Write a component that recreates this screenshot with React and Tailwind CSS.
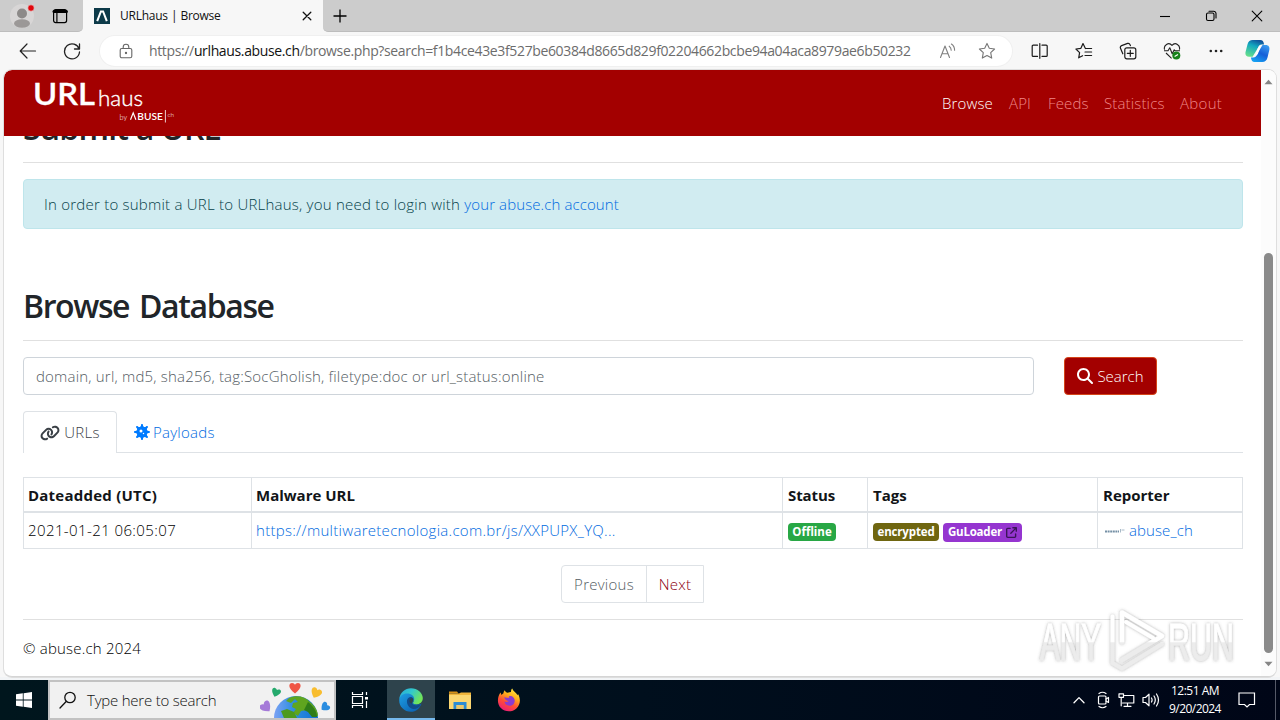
import React from "react";
import { FaLink, FaVirus, FaMagnifyingGlass, FaArrowUpRightFromSquare } from "react-icons/fa6";

function Ic({ className = "", children, w = 20, h = 20, sw = 1.1 }) {
  return (
    <svg className={"block shrink-0 " + className} width={w} height={h} viewBox={`0 0 ${w} ${h}`} fill="none" stroke="currentColor" strokeWidth={sw} strokeLinecap="round" strokeLinejoin="round">
      {children}
    </svg>
  );
}

function TabStrip() {
  return (
    <div className="flex h-8 shrink-0 bg-[#f7f7f7]">
      <div className="flex h-8 w-[83px] items-center rounded-br-[5px] border-b border-[#bdbdbd] bg-[#cccccc]">
        <svg className="ml-[10px] block" width="26" height="26" viewBox="0 0 26 26">
          <circle cx="12" cy="13" r="12" fill="#d8d6d6" />
          <circle cx="12" cy="10.5" r="5" fill="#8d8a89" />
          <ellipse cx="12" cy="20.5" rx="8" ry="4.2" fill="#9b9897" />
          <circle cx="21" cy="5" r="3.2" fill="#e0060c" stroke="#e8d5d5" strokeWidth=".6" />
        </svg>
        <Ic w={16} h={16} sw={1.2} className="ml-4 text-black">
          <rect x="1.6" y="1.6" width="13" height="13" rx="2" />
          <path d="M2 3.4h12.4" strokeWidth="3" />
          <path d="M4.9 4v10" strokeWidth="1.2" />
        </Ic>
      </div>
      <div className="flex h-8 w-[240px] items-center rounded-t-lg bg-[#f7f7f7] pl-[11px]">
        <svg width="16" height="16" viewBox="0 0 16 16" className="block">
          <rect width="16" height="16" fill="#0d3a49" />
          <path d="M3.2 13.2 6.9 3.4h2.2l3.7 9.8" fill="none" stroke="#fff" strokeWidth="2" />
        </svg>
        <span className="ml-[10px] w-[170px] whitespace-nowrap text-[12px] leading-4 tracking-[-0.25px] text-[#111] [word-spacing:0.3px]">URLhaus | Browse</span>
        <Ic w={10} h={10} sw={1.3} className="ml-[12px] text-[#111]"><path d="M1.2 1.2l7.6 7.6M8.8 1.2 1.2 8.8" /></Ic>
      </div>
      <div className="flex h-8 flex-1 items-center rounded-bl-[5px] border-b border-[#bdbdbd] bg-[#cccccc]">
        <Ic w={16} h={16} sw={1.3} className="ml-[9px] text-black"><path d="M8 1.5v13M1.5 8h13" strokeLinecap="butt" /></Ic>
        <div className="ml-auto flex items-center pr-[17px] text-black">
          <Ic w={12} h={12} className="mr-[34px]"><path d="M1 6.5h10" strokeLinecap="butt" /></Ic>
          <Ic w={12} h={12} className="mr-[34px]"><rect x="1.5" y="3" width="7.5" height="7.5" rx="1.5" /><path d="M4 1.2h4.5A2.4 2.4 0 0 1 11 3.6V8" /></Ic>
          <Ic w={12} h={12}><path d="M1.2 1.2l9.6 9.6M10.8 1.2 1.2 10.8" /></Ic>
        </div>
      </div>
    </div>
  );
}

function Toolbar() {
  return (
    <div className="flex h-[38px] shrink-0 items-center bg-[#f7f7f7] text-[#222]">
      <Ic w={18} h={18} sw={1.2} className="ml-[19px]"><path d="M16.5 9H1.5M8 2 1.2 9 8 16" /></Ic>
      <Ic w={18} h={18} sw={1.3} className="ml-[26px]"><path d="M16.2 7.2A7.5 7.5 0 1 0 16.5 10M16.5 2v5h-5" /></Ic>
      <div className="ml-[19px] flex h-[30px] w-[912px] items-center rounded-full bg-white shadow-[0_0_0_1px_#f0f0f0]">
        <Ic w={14} h={16} className="ml-[19px] text-[#666]"><rect x="1.2" y="5.5" width="11.6" height="9.3" rx="1.6" /><path d="M4.2 5.5V4a2.8 2.8 0 0 1 5.6 0v1.5" /><circle cx="7" cy="10" r=".6" fill="currentColor" /></Ic>
        <span className="ml-[16px] w-[780px] whitespace-nowrap text-[14px] leading-5 tracking-[-0.36px] text-[#6c6c6c]">
          https://<span className="text-[#111]">urlhaus.abuse.ch</span>/browse.php?search=f1b4ce43e3f527be60384d8665d829f02204662bcbe94a04aca8979ae6b50232
        </span>
        <Ic w={18} h={18} className="ml-[10px] text-[#808080]"><path d="M1.5 15.5 6 4l4.5 11.5M3 11.8h6M10.2 4.2q2 1.4 2 4M12.4 2q3.2 2.2 3.2 6.2" /></Ic>
        <Ic w={18} h={18} className="ml-[21px] text-[#777]"><path d="M9 1.4l2.3 4.9 5.3.7-3.9 3.7 1 5.4L9 13.5l-4.7 2.6 1-5.4L1.4 7l5.3-.7z" /></Ic>
      </div>
      <div className="ml-[19px] flex flex-1 items-center text-[#1b1b1b]">
        <Ic w={18} h={18} sw={1.2}><path d="M6.5 3.2H2.2a1 1 0 0 0-1 1v9.2a1 1 0 0 0 1 1h4.3M11 3.2h4.2a1 1 0 0 1 1 1v9.2a1 1 0 0 1-1 1H11M8.8 1.5v14.8" /></Ic>
        <Ic w={18} h={18} sw={1.2} className="ml-[26px]"><path d="M10.4 6.5 8 1.6 5.9 6.3l-5 .7 3.7 3.6-.9 5.2 3.9-2.1M10.4 6.500h6.200M10 10h6.600M10 13.500h6.600" /></Ic>
        <Ic w={18} h={18} sw={1.2} className="ml-[26px]"><rect x="5.8" y="5.8" width="11" height="11" rx="2" /><path d="M11.3 8.3v6M8.3 11.3h6M3.8 11.8 1.5 6.2a2 2 0 0 1 1.1-2.6l6-2.2A2 2 0 0 1 11 2.6l.4 1" /></Ic>
        <svg width="18" height="18" viewBox="0 0 18 18" className="ml-[26px] block" fill="none" stroke="#222" strokeWidth="1.1">
          <path d="M1.6 7.6C.2 3.5 5.6-.6 9 3.4c3.4-4 8.6.1 7.4 4.2M1 8.8h4l1.8-3 2.4 6 2-4 1 1H17M3 11l5.6 5.3" strokeLinejoin="round" />
          <circle cx="13.3" cy="13.6" r="4" fill="#16821b" stroke="none" /><path d="M11.6 14.5l3.4-2" stroke="#fff" strokeWidth="1.1" />
        </svg>
        <svg width="14" height="4" viewBox="0 0 14 4" className="ml-[28px] block" fill="#222"><circle cx="1.8" cy="2" r="1.3" /><circle cx="7" cy="2" r="1.3" /><circle cx="12.2" cy="2" r="1.3" /></svg>
        <svg width="25" height="24" viewBox="0 0 25 24" className="ml-[22px] block">
          <defs>
            <linearGradient id="cpa" x1=".6" y1="0" x2=".2" y2="1"><stop offset="0" stopColor="#10559c" /><stop offset=".35" stopColor="#12a7c0" /><stop offset="1" stopColor="#67e08b" /></linearGradient>
            <linearGradient id="cpb" x1=".8" y1="0" x2=".3" y2="1"><stop offset="0" stopColor="#3a9cf0" /><stop offset=".5" stopColor="#165fd8" /><stop offset="1" stopColor="#16a0f2" /></linearGradient>
          </defs>
          <path d="M17.5 6h3.200c3 0 4.300 2.200 3.600 5l-1.800 7.500c-.7 2.900-2.400 4.500-5.200 4.500H9.600c-2.300 0-3.100-1.600-3.700-4.600h2.400c2 0 3-1 3.600-3z" fill="url(#cpb)" />
          <path d="M7.6 17.700H4.100c-3 0-4.200-2.200-3.500-5L2.600 5C3.300 2.200 5.100 1 7.700 1h7.600c2.300 0 3.300 1.400 3.800 4.500h-2.300c-2 0-3 1-3.600 3z" fill="url(#cpa)" />
          <path d="M12.8 9.200q.9-2.400 3-2.400l-2.900 8q-.8 2-2.700 2z" fill="#fff" />
        </svg>
      </div>
    </div>
  );
}

function SiteHeader() {
  return (
    <header className="flex h-[66px] w-[1257px] shrink-0 items-center rounded-tl-lg bg-[#a30000] text-[16px]">
      <svg width="160" height="66" viewBox="0 0 160 66" className="ml-5 block" fill="#fff" fontFamily="Lato, sans-serif">
        <text x="9" y="35" fontSize="30" fontWeight="600" textLength="62" lengthAdjust="spacingAndGlyphs" stroke="#fff" strokeWidth=".3">URL</text>
        <text x="74" y="35.5" fontSize="22" fontWeight="300" textLength="45" lengthAdjust="spacingAndGlyphs" stroke="#fff" strokeWidth=".4">haus</text>
        <text x="95.5" y="49.8" fontSize="7.5" textLength="7.5" fontWeight="300" lengthAdjust="spacingAndGlyphs">by</text>
        <path d="M106.5 49.800l2.700-7 2.700 7" fill="none" stroke="#fff" strokeWidth="1.2" />
        <text x="113.3" y="49.8" fontSize="9.5" fontWeight="600" textLength="25.5" lengthAdjust="spacingAndGlyphs">BUSE</text>
        <path d="M141.4 40v12.500" stroke="#fff" strokeWidth=".8" />
        <text x="143.5" y="46.5" fontSize="6.5" textLength="6.5" fontWeight="300" lengthAdjust="spacingAndGlyphs">ch</text>
      </svg>
      <nav className="ml-auto flex pr-[38px] text-[15px] font-light tracking-[0.15px] text-[#f08888]">
        <span className="w-[67px] text-white">Browse</span>
        <span className="w-[39px]">API</span>
        <span className="w-[56px]">Feeds</span>
        <span className="w-[76px]">Statistics</span>
        <span className="w-[43px] tracking-[0.3px]">About</span>
      </nav>
    </header>
  );
}

const cols = "grid grid-cols-[228px_531px_85px_230px_144px]";

function ResultsTable() {
  return (
    <div className="mt-6 w-[1220px] border border-[#dee2e6] text-[15px] text-[#121518]">
      <div className={cols + " h-[35px] border-b-2 border-[#dee2e6] font-bold leading-[34px]"}>
        <div className="pl-1 tracking-[0.23px]">Dateadded (UTC)</div>
        <div className="-ml-px border-l border-[#dee2e6] pl-1">Malware URL</div>
        <div className="-ml-px border-l border-[#dee2e6] pl-[5px] tracking-[-0.1px]">Status</div>
        <div className="-ml-px border-l border-[#dee2e6] pl-[5px]">Tags</div>
        <div className="-ml-px border-l border-[#dee2e6] pl-[5px]">Reporter</div>
      </div>
      <div className={cols + " h-[35px] font-light leading-[34px]"}>
        <div className="pl-1 tracking-[0.4px] text-black">2021-01-21 06:05:07</div>
        <div className="-ml-px border-l border-[#dee2e6] pl-1 tracking-[0.29px] text-[#006ae0]">https://multiwaretecnologia.com.br/js/XXPUPX_YQ...</div>
        <div className="-ml-px flex items-center border-l border-[#dee2e6] pl-[5px]">
          <span className="mt-[3px] flex h-[18px] w-[48px] items-center justify-center rounded bg-[#28a745] text-[11.5px] font-bold leading-none text-white">Offline</span>
        </div>
        <div className="-ml-px flex items-center gap-1 border-l border-[#dee2e6] pl-[5px] text-[11.5px] font-bold leading-none text-white">
          <span className="mt-[3px] flex h-[18px] w-[66px] items-center justify-center rounded bg-[#6f6610] tracking-[-0.15px]">encrypted</span>
          <span className="mt-[3px] flex h-[19px] w-[79px] items-center justify-center gap-[4px] rounded bg-[#9535d0] tracking-[-0.2px]">GuLoader <FaArrowUpRightFromSquare className="text-[11px] text-[#3a1458]" /></span>
        </div>
        <div className="-ml-px flex items-center border-l border-[#dee2e6] pl-[6px] text-[#006ae0]">
          <svg width="21" height="6" viewBox="0 0 21 6" className="mr-[4px] block"><path d="M1 3.5h14" stroke="#7590a5" strokeWidth="2" strokeDasharray="2 .6" /><path d="M16.5 1v3.5M17.5 2h3" stroke="#a8bac8" strokeWidth="1" /></svg>
          <span className="-mt-px tracking-[0.1px]">abuse_ch</span>
        </div>
      </div>
    </div>
  );
}

function Watermark() {
  return (
    <svg className="pointer-events-none absolute left-[1025px] top-[534px] block" width="216" height="72" viewBox="0 0 216 72">
      <defs>
        <filter id="wm" x="-10%" y="-10%" width="120%" height="120%"><feDropShadow dx="0" dy="0" stdDeviation="1.6" floodColor="#555" floodOpacity=".5" /></filter>
        <linearGradient id="wg" gradientUnits="userSpaceOnUse" x1="0" y1="0" x2="0" y2="72"><stop offset=".52" stopColor="#fff" /><stop offset=".54" stopColor="#ececec" /></linearGradient>
      </defs>
      <g filter="url(#wm)" fill="url(#wg)" stroke="url(#wg)" strokeWidth="1" fontFamily="'Liberation Sans', Arial, sans-serif" fontSize="51">
        <text x="11" y="56" textLength="61" lengthAdjust="spacingAndGlyphs">ANY</text>
        <text x="139" y="56" textLength="66" lengthAdjust="spacingAndGlyphs">RUN</text>
        <path d="M93 38V8.500L133 32 93 56" fill="none" strokeWidth="4.5" strokeLinejoin="round" strokeLinecap="round" />
        <path d="M83.500 12.500V59L93 64.500 133 40M97 18l27 16" fill="none" strokeWidth="4" strokeLinejoin="round" strokeLinecap="round" />
      </g>
    </svg>
  );
}

function Page() {
  return (
    <div className="relative mx-1 h-[607px] w-[1272px] shrink-0 overflow-hidden rounded-lg border-b border-[#d5d5d5] bg-white shadow-[0_0_0_1px_#dedede]">
      <div className="flex h-full">
        <div className="flex w-[1257px] flex-col">
          <SiteHeader />
          <div className="flex-1 overflow-hidden">
            <main className="-mt-7 flex w-[1240px] flex-col pl-[19px] text-[#212529]">
              <h2 className="h-[38px] text-[32px] font-semibold leading-[40px] tracking-[-0.8px]">Submit a URL</h2>
              <div className="mt-4 h-px w-[1220px] bg-[#e0e0e0]" />
              <div className="mt-4 flex h-[50px] w-[1220px] items-center rounded border border-[#bee5eb] bg-[#d1ecf1] pl-5 text-[15px] font-light tracking-[0.23px] text-[#053f49]">
                <span className="whitespace-pre">In order to submit a URL to URLhaus, you need to login with <span className="tracking-[0.1px] text-[#006ae0]">your abuse.ch account</span></span>
              </div>
              <h2 className="mt-[57px] h-[38px] text-[32px] font-semibold leading-[40px] tracking-[-1.4px] [word-spacing:3px]">Browse Database</h2>
              <div className="mt-4 h-px w-[1220px] bg-[#e0e0e0]" />
              <div className="mt-4 flex h-[38px]">
                <div className="flex w-[1011px] items-center rounded border border-[#ced4da] pl-3 text-[15px] font-light tracking-[0.19px] text-[#545c63]">domain, url, md5, sha256, tag:SocGholish, filetype:doc or url_status:online</div>
                <button className="ml-[30px] flex w-[93px] items-center justify-center gap-1 rounded border border-[#d5451a] bg-[#a30000] text-[15px] font-light text-white"><FaMagnifyingGlass className="text-[16px]" />Search</button>
              </div>
              <div className="mt-4 flex h-[42px] w-[1220px] text-[15px] font-light tracking-[0.25px]">
                <div className="flex w-[94px] items-center justify-center gap-1 rounded-t border border-b-0 border-[#dee2e6] text-[#3a4046]"><FaLink className="h-5 w-5" />URLs</div>
                <div className="flex flex-1 items-center gap-[3px] border-b border-[#dee2e6] pl-[17px] text-[#006ae0]"><FaVirus className="text-[16px] text-[#007bff]" /><span className="pt-px">Payloads</span></div>
              </div>
              <ResultsTable />
              <div className="mt-4 ml-[538px] flex h-[38px] w-[143px] rounded-l border border-[#dee2e6] text-[15px] font-light tracking-[0.25px]">
                <span className="flex w-[85px] items-center justify-center border-r border-[#dee2e6] text-[#545c63]">Previous</span>
                <span className="flex flex-1 items-center justify-center text-[#8c0010]">Next</span>
              </div>
              <div className="mt-4 h-px w-[1220px] bg-[#e0e0e0]" />
              <p className="mt-4 text-[15px] font-light leading-6 tracking-[0.2px] text-black">© abuse.ch 2024</p>
            </main>
          </div>
        </div>
        <div className="flex flex-1 flex-col items-center bg-[#fcfcfc]">
          <svg width="9" height="6" viewBox="0 0 10 6" className="mt-[9px] block" fill="#858585"><path d="M.5 5.5 5 .5l4.500 5z" /></svg>
          <div className="mt-[168px] h-[400px] w-[9px] rounded-full bg-[#8a8a8a]" />
          <svg width="9" height="6" viewBox="0 0 10 6" className="mt-[8px] block" fill="#858585"><path d="M.5.5 5 5.500 9.500.5z" /></svg>
        </div>
      </div>
      <Watermark />
    </div>
  );
}

function Heart({ t, c }) {
  return <path transform={t} d="M0 5.500C-8-.5-6-5-3-5-1.500-5-.3-4-0-3.200.3-4 1.500-5 3-5 6-5 8-.5 0 5.500z" fill={c} />;
}

function Taskbar() {
  return (
    <div className="flex h-10 shrink-0 bg-gradient-to-r from-[#00161d] via-[#000f1d] to-[#000617] text-white">
      <div className="flex w-12 items-center justify-center">
        <svg width="16" height="16" viewBox="0 0 16 16" fill="#fff" className="block"><path d="M0 2.300l6.800-1v6.300H0zM7.600 1.200 16 0v7.600H7.600zM0 8.400h6.800v6.300L0 13.700zM7.600 8.400H16V16l-8.400-1.200z" /></svg>
      </div>
      <div className="flex h-10 w-[288px] items-center overflow-hidden border-2 border-[#c2c2c2] bg-[#f1f1f1] text-[#111]">
        <Ic w={18} h={18} sw={1.3} className="ml-[9px]"><circle cx="11" cy="6.500" r="5.200" /><path d="M7.200 10.500 1 17" /></Ic>
        <span className="ml-[10px] w-[169px] whitespace-nowrap pt-px text-[15px] font-light tracking-[-0.22px]">Type here to search</span>
        <svg width="74" height="36" viewBox="0 0 74 36" className="ml-[4px] block">
          <defs><linearGradient id="ea"><stop stopColor="#7ba2f4" /><stop offset=".45" stopColor="#2d8de0" /><stop offset="1" stopColor="#1372d3" /></linearGradient></defs>
          <circle cx="36" cy="36" r="22" fill="url(#ea)" />
          <path d="M29 16c7-3 16-2 21 4 5 4 8 9 8 14l-7-1-4-5-6 1-3 5-5-3 3-4-4-2 1-4 5-1-3-3-4 4-5-2z" fill="#5fa51f" />
          <path d="M21 29l6-2 7 3 3 6H24z" fill="#4c9a1d" />
          <path d="M48 20c5 4 9 9 9 15h-5l-4-5-4-2z" fill="#2f7d18" />
          <Heart t="translate(35 6)" c="#ef5544" />
          <Heart t="translate(16 10.500) rotate(20) scale(.8)" c="#25a96c" />
          <Heart t="translate(56 11) rotate(25) scale(.95)" c="#f8bd2f" />
          <Heart t="translate(65 25) rotate(50) scale(.8)" c="#2a8de0" />
          <Heart t="translate(6 25) rotate(-40)" c="#a57ad8" />
        </svg>
      </div>
      <div className="flex w-[51px] items-center justify-center">
        <Ic w={18} h={18} sw={1.2} className="mr-[3px]"><path d="M1.500 1v2.500h10V1M1.500 5.500h10v7h-10zM1.500 17v-2.500h10V17M15.500 1v3M15.500 10v7" strokeLinecap="butt" strokeLinejoin="miter" /><path d="M14 6h3v2.500h-3z" fill="#fff" stroke="none" /></Ic>
      </div>
      <div className="flex w-12 items-center justify-center border-b-2 border-[#76b9ed] bg-[#2e434c]">
        <svg width="24" height="24" viewBox="0 0 24 24" className="mt-[1px] block">
          <defs>
            <linearGradient id="e1" x1="0" y1="0" x2="1" y2=".5"><stop stopColor="#27a9dc" /><stop offset=".5" stopColor="#32c8cd" /><stop offset="1" stopColor="#72e558" /></linearGradient>
            <linearGradient id="e2" x1="0" y1="0" x2="1" y2="1"><stop stopColor="#1e9fe4" /><stop offset="1" stopColor="#0959ab" /></linearGradient>
          </defs>
          <path d="M.4 10.500C1 4.500 6 .2 12 .2c6.500 0 11.800 4.800 11.800 9.900 0 4-3 6.300-6.400 6.300-2.500 0-4-1-3.300-2 2-3-.1-6-3.800-6-4.400-.2-8.300 1.100-9.900 2.100z" fill="url(#e1)" />
          <path d="M.2 12C.4 8 4 5.500 8 5.500c4.500 0 7.200 2.500 7.200 5.500 0 1.400-.8 2.300-1.200 3-.7 1.200 1 2.600 4 2.600 1.700 0 3.400-.4 4.500-1.200C21 20 17 23.800 12 23.800 5.400 23.800 0 18.600.2 12z" fill="url(#e2)" />
          <path d="M8 12.500c.5-3 3-4.200 5-3.300 1.400 1 1.500 3 .5 4.800-1 1.800 1.200 3.300 4.500 3.200 1.700 0 3.400-.4 4.500-1.200-2 4-6 5.500-8.500 5-4-.8-6.500-5-6-8.500z" fill="#124b8a" />
          <path d="M10.500 12.200c.5-1.700 2.400-2.400 3.800-1.400.1 1.400-.5 2.400-1 3.200l-.3 1.500c-1.600-.3-2.800-1.700-2.500-3.300z" fill="#2e434c" />
        </svg>
      </div>
      <div className="flex w-[49px] items-center justify-center">
        <svg width="22" height="19" viewBox="0 0 22 19" className="block"><path d="M0 .5h8l1.500 2H0z" fill="#d99216" /><path d="M0 3h22v15H0z" fill="#fbd771" /><path d="M0 2.500h10l2-1h10v2.500H0z" fill="#f0b53b" /><path d="M4.500 18v-7h13v7h-3v-4h-7v4z" fill="#2b8cd3" /><path d="M7.500 14h7v4h-7z" fill="#e9c86c" /></svg>
      </div>
      <div className="flex w-[49px] items-center justify-center">
        <svg width="24" height="24" viewBox="0 0 24 24" className="mb-px block">
          <defs><linearGradient id="ff" x1=".8" y1="0" x2=".3" y2="1"><stop stopColor="#fff044" /><stop offset=".35" stopColor="#ffae1c" /><stop offset=".65" stopColor="#ff4e34" /><stop offset="1" stopColor="#eb1b7a" /></linearGradient></defs>
          <path d="M3.500 4.500l1 2.500c.7-1 1.300-1.500 2-1.800 0-1 .4-2.200 1.300-3 .3 1 1.200 2 2.300 2.500L14 4c-.1-1.600.4-2.800 1.200-3.600 1 3 4.200 4 5.300 6.800l.5-1.200c3 5 2.400 11-1.600 14.500-4.500 4-11.500 3.700-15.500-.5C-.2 16 .2 9 3.500 4.500z" fill="url(#ff)" />
          <path d="M7 9.500c2-.2 2.500.3 4.500.3 1-.1 1-.8.200-1.700 3.300-.8 6 1.500 6 4.600 0 3-2.300 5-5.200 5-3 0-5-2-5-4.200 1.400.8 3 .6 4.300-.4-2.300-.3-3.800-1.600-4.800-3.600z" fill="#8b3bd0" />
        </svg>
      </div>
      <div className="ml-auto flex items-center">
        <Ic w={12} h={8} sw={1.3}><path d="M1 6.800 6 1.600l5 5.200" /></Ic>
        <Ic w={14} h={18} sw={1.2} className="ml-[11px]"><rect x="2.500" y="5" width="7.500" height="8" rx="1" /><path d="M10 8l2.500-1.500v5L10 10M3 2.500Q6.500 0 10 2.500M3 15.500q3.500 2.500 7 0" /></Ic>
        <Ic w={17} h={16} sw={1.2} className="ml-[8px]"><path d="M6.500 3.500h9.300v7.500H4.500M9.500 11v3.300M6 14.300h7M1 1.800h4.500v3.500H1zM3.200 5.300v8.500" /></Ic>
        <Ic w={18} h={16} sw={1.2} className="ml-[7px]"><path d="M1 5.500h2.500L7 2.200v11.600l-3.500-3.300H1zM9.500 6q1.200 2 0 4M12 4q2.600 4 0 8M14.500 2q4 6 0 12" /></Ic>
        <div className="ml-[7px] flex w-[56px] flex-col whitespace-nowrap text-center text-[12px] leading-[18px]"><span className="tracking-[-0.5px]">12:51 AM</span><span className="tracking-[-0.55px]">9/20/2024</span></div>
        <Ic w={18} h={18} sw={1.2} className="ml-[15px]"><path d="M1 2h15.500v11.500h-5L9 16l-2.500-2.500H1z" strokeLinejoin="miter" /></Ic>
        <div className="ml-[19px] mr-[4px] h-10 w-px bg-[#555a68]" />
      </div>
    </div>
  );
}

export default function App() {
  return (
    <div className="flex h-[720px] w-[1280px] flex-col overflow-hidden bg-[#f7f7f7] font-['Open_Sans','Noto_Sans',sans-serif]">
      <TabStrip />
      <Toolbar />
      <Page />
      <div className="h-[3px] shrink-0 bg-[#f2f4f6]" />
      <Taskbar />
    </div>
  );
}
